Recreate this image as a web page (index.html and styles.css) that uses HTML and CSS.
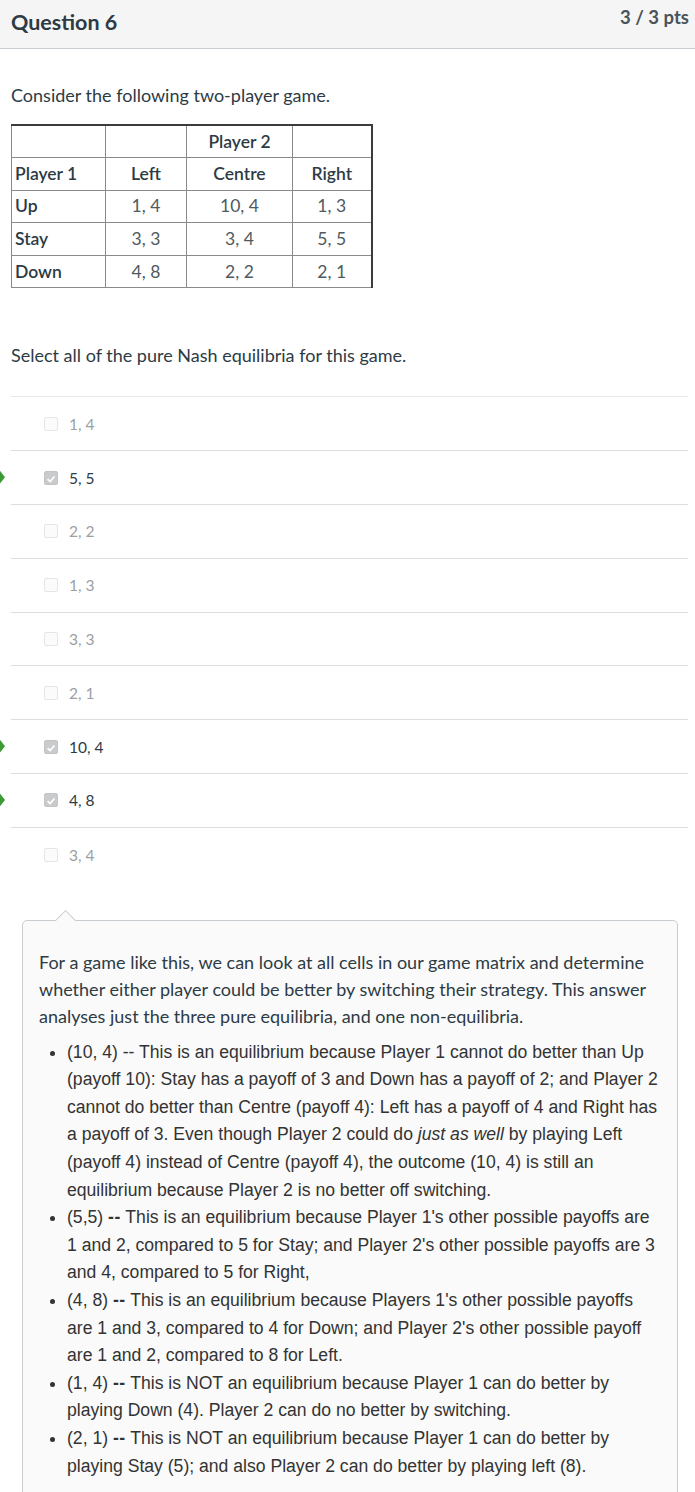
FILE: index.html
```html
<!DOCTYPE html>
<html>
<head>
<meta charset="utf-8">
<link rel="stylesheet" href="styles.css">
</head>
<body>
<div class="header">
  <h2 class="title">Question 6</h2>
  <div class="pts">3 / 3 pts</div>
</div>
<div class="content">
  <p class="intro">Consider the following two-player game.</p>
  <table class="game">
    <tr><td class="lbl"></td><td></td><td class="lbl c">Player 2</td><td></td></tr>
    <tr><td class="lbl">Player 1</td><td class="lbl c">Left</td><td class="lbl c">Centre</td><td class="lbl c">Right</td></tr>
    <tr><td class="lbl">Up</td><td class="c">1, 4</td><td class="c">10, 4</td><td class="c">1, 3</td></tr>
    <tr><td class="lbl">Stay</td><td class="c">3, 3</td><td class="c">3, 4</td><td class="c">5, 5</td></tr>
    <tr><td class="lbl">Down</td><td class="c">4, 8</td><td class="c">2, 2</td><td class="c">2, 1</td></tr>
  </table>
  <p class="prompt">Select all of the pure Nash equilibria for this game.</p>
  <div class="answers">
    <div class="answer"><span class="box"></span><span class="atext">1, 4</span></div>
    <div class="answer sel"><span class="mark"></span><span class="box"><svg viewBox="0 0 14 14" width="14" height="14"><path d="M3 7.2 L6 10 L11 4" fill="none" stroke="#fff" stroke-width="2"/></svg></span><span class="atext">5, 5</span></div>
    <div class="answer"><span class="box"></span><span class="atext">2, 2</span></div>
    <div class="answer"><span class="box"></span><span class="atext">1, 3</span></div>
    <div class="answer"><span class="box"></span><span class="atext">3, 3</span></div>
    <div class="answer"><span class="box"></span><span class="atext">2, 1</span></div>
    <div class="answer sel"><span class="mark"></span><span class="box"><svg viewBox="0 0 14 14" width="14" height="14"><path d="M3 7.2 L6 10 L11 4" fill="none" stroke="#fff" stroke-width="2"/></svg></span><span class="atext">10, 4</span></div>
    <div class="answer sel"><span class="mark"></span><span class="box"><svg viewBox="0 0 14 14" width="14" height="14"><path d="M3 7.2 L6 10 L11 4" fill="none" stroke="#fff" stroke-width="2"/></svg></span><span class="atext">4, 8</span></div>
    <div class="answer last"><span class="box"></span><span class="atext">3, 4</span></div>
  </div>
  <div class="explain">
    <p class="exp-p">For a game like this, we can look at all cells in our game matrix and determine whether either player could be better by switching their strategy. This answer analyses just the three pure equilibria, and one non-equilibria.</p>
    <ul class="exp-list">
      <li>(10, 4) -- This is an equilibrium because Player 1 cannot do better than Up (payoff 10): Stay has a payoff of 3 and Down has a payoff of 2; and Player 2 cannot do better than Centre (payoff 4): Left has a payoff of 4 and Right has a payoff of 3. Even though Player 2 could do <em>just as well</em> by playing Left (payoff 4) instead of Centre (payoff 4), the outcome (10, 4) is still an equilibrium because Player 2 is no better off switching.</li>
      <li>(5,5) <b>--</b> This is an equilibrium because Player 1's other possible payoffs are 1 and 2, compared to 5 for Stay; and Player 2's other possible payoffs are 3 and 4, compared to 5 for Right,</li>
      <li>(4, 8) <b>--</b> This is an equilibrium because Players 1's other possible payoffs are 1 and 3, compared to 4 for Down; and Player 2's other possible payoff are 1 and 2, compared to 8 for Left.</li>
      <li>(1, 4) <b>--</b> This is NOT an equilibrium because Player 1 can do better by playing Down (4). Player 2 can do no better by switching.</li>
      <li>(2, 1) <b>--</b> This is NOT an equilibrium because Player 1 can do better by playing Stay (5); and also Player 2 can do better by playing left (8).</li>
    </ul>
  </div>
</div>
</body>
</html>
```

FILE: styles.css
```css
html, body {
  margin: 0;
  padding: 0;
  background: #fff;
}
body {
  font-family: Lato, "Noto Sans", sans-serif;
  color: #2d3b45;
  width: 695px;
  overflow: hidden;
}
.header {
  height: 49px;
  box-sizing: border-box;
  background: #f5f5f5;
  border-bottom: 1px solid #c7cdd1;
  display: flex;
  align-items: flex-start;
  justify-content: space-between;
  padding: 0 6px 0 11px;
}
.title {
  margin: 9px 0 0;
  font-size: 21.5px;
  font-weight: 700;
  color: #2d3b45;
  line-height: 26px;
}
.pts {
  margin-top: 5px;
  font-size: 18.5px;
  font-weight: 700;
  color: #4a5359;
  line-height: 24px;
}
.content {
  padding: 0 7px 0 11px;
}
.intro {
  margin: 34px 0 0;
  font-size: 18px;
  line-height: 24px;
}
.game {
  margin-top: 17px;
  border-collapse: collapse;
  font-size: 17.5px;
}
.game td {
  border: 1px solid #8a8a8a;
  height: 32.6px;
  padding: 0 3px;
  box-sizing: border-box;
  color: #505a60;
  line-height: 20px;
}
.game tr:first-child td { border-top: 2px solid #3c3c3c; }
.game tr td:last-child { border-right: 2px solid #3c3c3c; }
.game td:nth-child(1) { width: 94px; }
.game td:nth-child(2) { width: 81px; }
.game td:nth-child(3) { width: 106px; }
.game td:nth-child(4) { width: 79px; }
.game td.lbl {
  color: #2d3b45;
  font-weight: 600;
}
.game td.c { text-align: center; }
.prompt {
  margin: 55px 0 0;
  font-size: 18px;
  line-height: 24px;
}
.answers {
  margin-top: 29px;
  border-top: 1px solid #e6e8ea;
}
.answer {
  position: relative;
  height: 53.8px;
  box-sizing: border-box;
  border-bottom: 1px solid #dcdfe2;
  display: flex;
  align-items: center;
  padding-left: 33px;
}
.answer.last { border-bottom: none; }
.box {
  width: 14px;
  height: 14px;
  box-sizing: border-box;
  border: 1px solid #e3e6e8;
  border-radius: 2px;
  background: #fbfbfb;
  margin-right: 11px;
  display: flex;
}
.sel .box {
  background: #c9cbcd;
  border-color: #c2c4c6;
}
.atext {
  font-size: 15.5px;
  color: #9aa0a4;
}
.sel .atext { color: #2d3b45; }
.mark {
  position: absolute;
  left: -22px;
  top: 50%;
  width: 16px;
  height: 13px;
  margin-top: -7px;
  background: #3c9a37;
  clip-path: polygon(0 0, 68% 0, 100% 50%, 68% 100%, 0 100%);
}
.explain {
  position: relative;
  margin: 38px 10px 0 11px;
  border: 1px solid #c7cdd1;
  border-radius: 5px;
  background: #fafafa;
  padding: 28px 16px 40px 16px;
}
.explain::before {
  content: "";
  position: absolute;
  top: -8px;
  left: 35px;
  width: 14px;
  height: 14px;
  background: #fafafa;
  border-top: 1px solid #c7cdd1;
  border-left: 1px solid #c7cdd1;
  transform: rotate(45deg);
}
.exp-p {
  margin: 0 0 9px;
  font-size: 18px;
  line-height: 27px;
  color: #2d3b45;
}
.exp-list {
  margin: 0;
  padding-left: 28px;
  font-family: "Liberation Sans", Arial, sans-serif;
  font-size: 17.6px;
  line-height: 27.6px;
  color: #333;
}
.exp-list b { font-weight: 700; letter-spacing: 0.5px; }
```
